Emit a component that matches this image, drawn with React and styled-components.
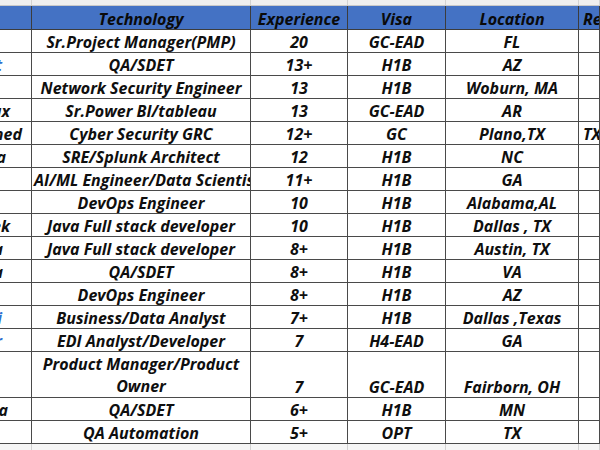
import React from 'react';
import styled, { createGlobalStyle } from 'styled-components';

// Data
const rows = [
	{ name: '', tech: 'Sr.Project Manager(PMP)', exp: '20', visa: 'GC-EAD', loc: 'FL' },
	{ name: 'Ajit', end: 29, link: true, tech: 'QA/SDET', exp: '13+', visa: 'H1B', loc: 'AZ' },
	{ name: '', tech: 'Network Security Engineer', exp: '13', visa: 'H1B', loc: 'Woburn, MA' },
	{ name: 'Max', end: 21, tech: 'Sr.Power BI/tableau', exp: '13', visa: 'GC-EAD', loc: 'AR' },
	{ name: 'Ahmed', end: 9, tech: 'Cyber Security GRC', exp: '12+', visa: 'GC', loc: 'Plano,TX', reloc: 'TX' },
	{ name: 'Priya', end: 25, tech: 'SRE/Splunk Architect', exp: '12', visa: 'H1B', loc: 'NC' },
	{ name: '', tech: 'AI/ML Engineer/Data Scientist', exp: '11+', visa: 'H1B', loc: 'GA' },
	{ name: '', tech: 'DevOps Engineer', exp: '10', visa: 'H1B', loc: 'Alabama,AL' },
	{ name: 'Abhishek', end: 21, tech: 'Java Full stack developer', exp: '10', visa: 'H1B', loc: 'Dallas , TX' },
	{ name: 'Sneha', end: 28, tech: 'Java Full stack developer', exp: '8+', visa: 'H1B', loc: 'Austin, TX' },
	{ name: 'Anusha', end: 28, tech: 'QA/SDET', exp: '8+', visa: 'H1B', loc: 'VA' },
	{ name: '', tech: 'DevOps Engineer', exp: '8+', visa: 'H1B', loc: 'AZ' },
	{ name: 'Ravi', end: 29, link: true, tech: 'Business/Data Analyst', exp: '7+', visa: 'H1B', loc: 'Dallas ,Texas' },
	{ name: 'Kumar', end: 29, link: true, tech: 'EDI Analyst/Developer', exp: '7', visa: 'H4-EAD', loc: 'GA' },
	{ name: '', tech: 'Product Manager/Product Owner', exp: '7', visa: 'GC-EAD', loc: 'Fairborn, OH', tall: true },
	{ name: 'Swetha', end: 23, tech: 'QA/SDET', exp: '6+', visa: 'H1B', loc: 'MN' },
	{ name: '', tech: 'QA Automation', exp: '5+', visa: 'OPT', loc: 'TX' },
];

// Component
const App = () => {
	return (
		<>
			<GlobalStyle />
			<Sheet>
				<Strip>
					{[0, 1, 2, 3, 4, 5].map((i) => <StripCell key={i} />)}
				</Strip>
				<HeaderRow>
					<HeadCell />
					<HeadCell><Text>Technology</Text></HeadCell>
					<HeadCell><Text>Experience</Text></HeadCell>
					<HeadCell><Text>Visa</Text></HeadCell>
					<HeadCell><Text>Location</Text></HeadCell>
					<HeadCell><Text $left>Relocation</Text></HeadCell>
				</HeaderRow>
				{rows.map((row, i) => (
					<Row key={i} $tall={row.tall}>
						<NameCell $end={row.end || 0} $link={row.link}>
							<span>{row.name}</span>
						</NameCell>
						<Cell><Text $wrap={row.tall}>{row.tech}</Text></Cell>
						<Cell><Text>{row.exp}</Text></Cell>
						<Cell><Text>{row.visa}</Text></Cell>
						<Cell><Text>{row.loc}</Text></Cell>
						<Cell><Text $left>{row.reloc || ''}</Text></Cell>
					</Row>
				))}
				<Strip $bottom>
					{[0, 1, 2, 3, 4, 5].map((i) => <StripCell key={i} />)}
				</Strip>
			</Sheet>
		</>
	);
};

// Styled
const GlobalStyle = createGlobalStyle`
	html, body {
		margin: 0;
		padding: 0;
		background: #ffffff;
		overflow: hidden;
	}
`;

const columns = '32px 219px 97px 98px 133px 21px';

const Sheet = styled.div`
	width: 600px;
	height: 450px;
	overflow: hidden;
	font-family: "Open Sans", "Liberation Sans", sans-serif;
	font-weight: 700;
	font-style: italic;
	font-size: 16px;
	color: #0f0f0f;
`;

const Strip = styled.div`
	display: grid;
	grid-template-columns: ${columns};
	height: ${(p) => (p.$bottom ? '8px' : '6px')};
	background: ${(p) => (p.$bottom ? '#f6f6f6' : '#efefef')};
	border-bottom: ${(p) => (p.$bottom ? 'none' : '1px solid #c9c9c9')};
	box-sizing: border-box;
`;

const StripCell = styled.div`
	border-right: 1px solid #d2d2d2;
`;

const HeaderRow = styled.div`
	display: grid;
	grid-template-columns: ${columns};
	height: 24px;
	background: #4472c4;
	border-bottom: 1px solid #3c3c3c;
	box-sizing: border-box;
`;

const HeadCell = styled.div`
	display: flex;
	align-items: flex-end;
	border-right: 1px solid #3c3c3c;
	overflow: hidden;
	color: #0a0a0a;
`;

const Row = styled.div`
	display: grid;
	grid-template-columns: ${columns};
	height: ${(p) => (p.$tall ? '46px' : '23px')};
	border-bottom: 1px solid #4a4a4a;
	box-sizing: border-box;
`;

const Cell = styled.div`
	display: flex;
	align-items: flex-end;
	border-right: 1px solid #4a4a4a;
	overflow: hidden;
`;

const Text = styled.div`
	width: 100%;
	box-sizing: border-box;
	padding: ${(p) => (p.$left ? '0 0 0 4px' : '0 2px')};
	text-align: ${(p) => (p.$left ? 'left' : 'center')};
	line-height: ${(p) => (p.$wrap ? '22px' : '20px')};
	white-space: ${(p) => (p.$wrap ? 'normal' : 'nowrap')};
	overflow: hidden;
`;

const NameCell = styled.div`
	display: flex;
	align-items: flex-end;
	justify-content: flex-end;
	padding-right: ${(p) => p.$end}px;
	border-right: 1px solid #4a4a4a;
	line-height: 20px;
	white-space: nowrap;
	overflow: hidden;
	color: ${(p) => (p.$link ? '#2f6fd0' : '#111111')};
	span {
		flex-shrink: 0;
	}
`;

// Export
export default App;
